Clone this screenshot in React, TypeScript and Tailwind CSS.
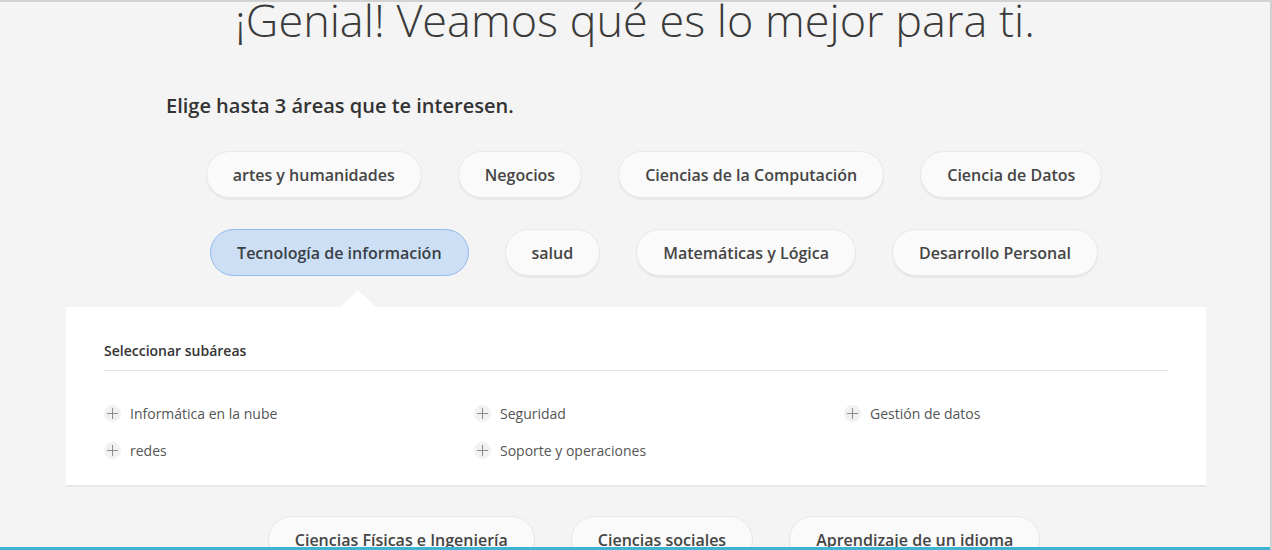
import React from "react";

const rowOne = ["artes y humanidades", "Negocios", "Ciencias de la Computación", "Ciencia de Datos"];
const rowTwo = ["Tecnología de información", "salud", "Matemáticas y Lógica", "Desarrollo Personal"];
const rowThree = ["Ciencias Físicas e Ingeniería", "Ciencias sociales", "Aprendizaje de un idioma"];

const subAreas = [
  "Informática en la nube",
  "Seguridad",
  "Gestión de datos",
  "redes",
  "Soporte y operaciones",
];

const Chip: React.FC<{ label: string; selected?: boolean }> = ({ label, selected }) => (
  <button
    className={
      selected
        ? "ml-[36px] h-[47px] px-[26px] rounded-full border border-[#91b9ec] bg-[#cddff4] text-[16px] font-semibold text-[#3a3f47] whitespace-nowrap"
        : "ml-[36px] h-[47px] px-[26px] rounded-full border border-[#e8e8e8] bg-[#fafafa] text-[16px] font-semibold text-[#454545] whitespace-nowrap shadow-[0_2px_1px_rgba(0,0,0,0.05)]"
    }
  >
    {label}
  </button>
);

const PlusIcon = () => (
  <span className="w-[17px] h-[17px] rounded-full bg-[#f1f1f1] flex items-center justify-center shrink-0">
    <svg width="11" height="11" viewBox="0 0 11 11">
      <path d="M5.5 0v11M0 5.5h11" stroke="#8c8c8c" strokeWidth="1" />
    </svg>
  </span>
);

export default function App() {
  return (
    <div
      className="relative h-[550px] overflow-hidden bg-[#f4f4f4] border-t-2 border-t-[#d2d2d2] border-r-2 border-r-[#d0d0d0]"
      style={{ fontFamily: '"Open Sans", "Liberation Sans", sans-serif' }}
    >
      <h1 className="-mt-[6px] h-[48px] leading-[48px] text-center text-[45px] font-light text-[#3a3a3a] whitespace-nowrap">
        ¡Genial! Veamos qué es lo mejor para ti.
      </h1>

      <div className="ml-[66px] w-[1140px]">
        <p className="mt-[49px] pl-[100px] text-[20px] leading-[26px] font-semibold text-[#333]">
          Elige hasta 3 áreas que te interesen.
        </p>

        <div className="mt-[32px] flex justify-center">
          {rowOne.map((c) => (
            <Chip key={c} label={c} />
          ))}
        </div>
        <div className="mt-[31px] flex justify-center">
          {rowTwo.map((c, i) => (
            <Chip key={c} label={c} selected={i === 0} />
          ))}
        </div>

        <div className="relative mt-[31px] bg-white px-[38px] pt-[34px] pb-[25px] border-b-2 border-[#e6e8eb]">
          <span className="absolute -top-[17px] left-[274px] w-0 h-0 border-l-[18px] border-r-[18px] border-b-[17px] border-l-transparent border-r-transparent border-b-white" />
          <div className="pb-[9px] border-b border-[#e2e2e2] text-[14px] leading-[20px] font-semibold text-[#333]">
            Seleccionar subáreas
          </div>
          <div className="mt-[32px] grid grid-cols-[370px_370px_1fr] gap-y-[17px]">
            {subAreas.map((s) => (
              <div key={s} className="flex items-center gap-[9px] h-[20px] text-[14px] text-[#555]">
                <PlusIcon />
                <span>{s}</span>
              </div>
            ))}
          </div>
        </div>

        <div className="mt-[29px] flex justify-center">
          {rowThree.map((c) => (
            <Chip key={c} label={c} />
          ))}
        </div>
      </div>

      <div className="absolute left-0 right-0 bottom-0 h-[3px] bg-[#3fb4d2]" />
    </div>
  );
}
